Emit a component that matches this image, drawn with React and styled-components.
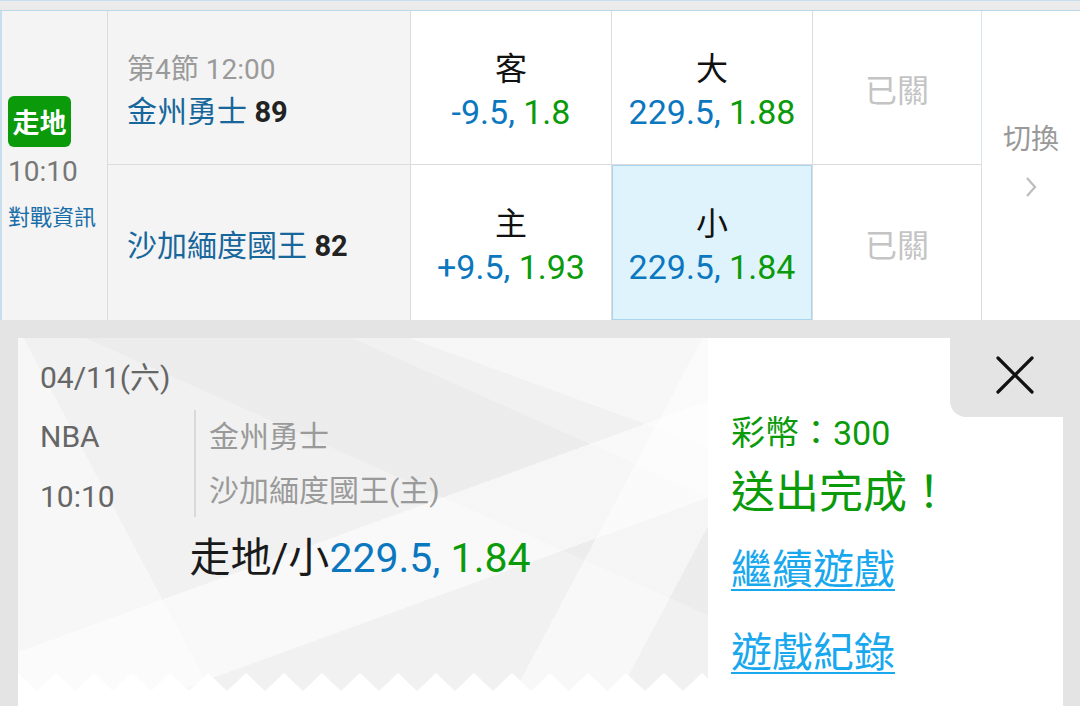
import React from "react";
import styled, { createGlobalStyle } from "styled-components";

const GlobalStyle = createGlobalStyle`
  html, body {
    margin: 0;
    padding: 0;
    background: #e4e4e4;
  }
  body {
    font-family: Roboto, "Noto Sans CJK TC", sans-serif;
    width: 1080px;
    height: 706px;
    overflow: hidden;
  }
  * {
    box-sizing: border-box;
  }
`;

const BLUE = "#0b77bf";
const GREEN = "#0a9a0a";

const rows = [
  {
    team: "金州勇士",
    score: 89,
    side: "客",
    spread: "-9.5",
    spreadOdds: "1.8",
    total: "大",
    totalLine: "229.5",
    totalOdds: "1.88",
  },
  {
    team: "沙加緬度國王",
    score: 82,
    side: "主",
    spread: "+9.5",
    spreadOdds: "1.93",
    total: "小",
    totalLine: "229.5",
    totalOdds: "1.84",
    picked: true,
  },
];

const App = () => {
  return (
    <Page>
      <GlobalStyle />
      <TopStrip />
      <MarketTable>
        <SideCell>
          <LiveBadge>走地</LiveBadge>
          <KickOff>10:10</KickOff>
          <InfoLink>對戰資訊</InfoLink>
        </SideCell>
        {rows.map((row, i) => (
          <React.Fragment key={row.team}>
            <TeamCell $last={i === 1}>
              {i === 0 && <Period>第4節 12:00</Period>}
              <TeamName>
                {row.team} <Score>{row.score}</Score>
              </TeamName>
            </TeamCell>
            <OddsCell $last={i === 1}>
              <OddsLabel>{row.side}</OddsLabel>
              <OddsValue>
                <Line>{row.spread}, </Line>
                <Price>{row.spreadOdds}</Price>
              </OddsValue>
            </OddsCell>
            <OddsCell $last={i === 1} $picked={row.picked}>
              <OddsLabel>{row.total}</OddsLabel>
              <OddsValue>
                <Line>{row.totalLine}, </Line>
                <Price>{row.totalOdds}</Price>
              </OddsValue>
            </OddsCell>
            <ClosedCell $last={i === 1}>已關</ClosedCell>
            {i === 0 && (
              <SwitchCell>
                <SwitchText>切換</SwitchText>
                <svg width="14" height="24" viewBox="0 0 14 24">
                  <path
                    d="M3 3 L11 12 L3 21"
                    fill="none"
                    stroke="#bdbdbd"
                    strokeWidth="2.2"
                  />
                </svg>
              </SwitchCell>
            )}
          </React.Fragment>
        ))}
      </MarketTable>

      <Overlay>
        <Card>
          <Ticket>
            <TicketBody>
              <DateText>04/11(六)</DateText>
              <InfoBlock>
                <MetaCol>
                  <MetaText>NBA</MetaText>
                  <MetaText>10:10</MetaText>
                </MetaCol>
                <TeamsCol>
                  <TicketTeam>金州勇士</TicketTeam>
                  <TicketTeam>沙加緬度國王(主)</TicketTeam>
                </TeamsCol>
              </InfoBlock>
              <BetLine>
                走地/小<Line>229.5, </Line>
                <Price>1.84</Price>
              </BetLine>
            </TicketBody>
            <Zigzag viewBox="0 0 690 18" preserveAspectRatio="none">
              <defs>
                <pattern
                  id="teeth"
                  x="0"
                  y="0"
                  width="38"
                  height="18"
                  patternUnits="userSpaceOnUse"
                >
                  <polygon points="0,0 19,18 38,0 38,18 0,18" fill="#ffffff" />
                </pattern>
              </defs>
              <rect x="0" y="0" width="690" height="18" fill="url(#teeth)" />
            </Zigzag>
          </Ticket>

          <ResultPane>
            <CloseTab aria-label="close">
              <svg width="40" height="40" viewBox="0 0 40 40">
                <path
                  d="M3 3 L37 37 M37 3 L3 37"
                  stroke="#111"
                  strokeWidth="3.2"
                  strokeLinecap="round"
                />
              </svg>
            </CloseTab>
            <Coins>彩幣：300</Coins>
            <Done>送出完成！</Done>
            <ActionLink href="#" $gap={21}>
              繼續遊戲
            </ActionLink>
            <ActionLink href="#" $gap={27}>
              遊戲紀錄
            </ActionLink>
          </ResultPane>
        </Card>
      </Overlay>
    </Page>
  );
};

const Page = styled.div`
  width: 1080px;
  height: 706px;
  display: flex;
  flex-direction: column;
  background: #e4e4e4;
`;

const TopStrip = styled.div`
  height: 11px;
  background: #ebebeb;
  border-top: 1px solid #c6dfee;
  border-bottom: 1px solid #b9d8ea;
`;

const MarketTable = styled.div`
  display: grid;
  grid-template-columns: 108px 303px 201px 201px 169px 98px;
  grid-template-rows: 154px 155px;
  background: #fff;
`;

const Cell = styled.div`
  border-right: 1px solid #dcdcdc;
  border-bottom: ${(p) => (p.$last ? "none" : "1px solid #dcdcdc")};
  display: flex;
  flex-direction: column;
  justify-content: center;
`;

const SideCell = styled(Cell)`
  grid-row: span 2;
  border-bottom: none;
  border-left: 2px solid #c7deed;
  background: #f4f4f4;
  padding-left: 6px;
  padding-bottom: 4px;
  align-items: flex-start;
`;

const LiveBadge = styled.div`
  width: 63px;
  height: 51px;
  border-radius: 6px;
  background: ${GREEN};
  color: #fff;
  font-size: 27px;
  font-weight: 700;
  display: flex;
  align-items: center;
  justify-content: center;
`;

const KickOff = styled.div`
  margin-top: 7px;
  font-size: 28px;
  line-height: 36px;
  color: #777;
`;

const InfoLink = styled.div`
  margin-top: 14px;
  font-size: 22px;
  line-height: 28px;
  color: #1a6ea8;
  white-space: nowrap;
`;

const TeamCell = styled(Cell)`
  background: #f4f4f4;
  padding-left: 19px;
  padding-top: 6px;
`;

const Period = styled.div`
  font-size: 28px;
  line-height: 42px;
  color: #9a9a9a;
`;

const TeamName = styled.div`
  font-size: 30px;
  line-height: 42px;
  color: #17679d;
`;

const Score = styled.span`
  font-weight: 700;
  color: #222;
  font-size: 29px;
`;

const OddsCell = styled(Cell)`
  align-items: center;
  background: ${(p) => (p.$picked ? "#dff3fd" : "#fff")};
  box-shadow: ${(p) => (p.$picked ? "inset 0 0 0 1px #a8d4ee" : "none")};
  padding-top: 6px;
`;

const OddsLabel = styled.div`
  font-size: 32px;
  line-height: 42px;
  color: #111;
`;

const OddsValue = styled.div`
  font-size: 34px;
  line-height: 44px;
  white-space: nowrap;
`;

const Line = styled.span`
  color: ${BLUE};
`;

const Price = styled.span`
  color: ${GREEN};
`;

const ClosedCell = styled(Cell)`
  align-items: center;
  font-size: 32px;
  color: #c4c4c4;
`;

const SwitchCell = styled(Cell)`
  grid-row: span 2;
  border-bottom: none;
  border-right: none;
  border-left: 1px solid #d9e5ee;
  margin-left: -1px;
  align-items: center;
  gap: 17px;
  padding-bottom: 10px;
`;

const SwitchText = styled.div`
  font-size: 28px;
  line-height: 36px;
  color: #999;
`;

const Overlay = styled.div`
  flex: 1;
  padding: 18px 17px 0 18px;
  display: flex;
  min-height: 0;
`;

const Card = styled.div`
  flex: 1;
  display: flex;
  background: #fff;
  overflow: hidden;
`;

const Ticket = styled.div`
  width: 690px;
  height: 353px;
  display: flex;
  flex-direction: column;
  background:
    linear-gradient(160deg, transparent 0 52%, rgba(255, 255, 255, 0.55) 52% 68%, transparent 68%),
    linear-gradient(62deg, rgba(255, 255, 255, 0.45) 0 22%, transparent 22%),
    linear-gradient(118deg, transparent 0 78%, rgba(255, 255, 255, 0.5) 78% 90%, transparent 90%),
    linear-gradient(24deg, transparent 0 58%, rgba(0, 0, 0, 0.018) 58% 76%, transparent 76%),
    linear-gradient(200deg, rgba(255, 255, 255, 0.4) 0 18%, transparent 18%),
    #f1f1f1;
`;

const TicketBody = styled.div`
  flex: 1;
  padding: 20px 0 0 22px;
  display: flex;
  flex-direction: column;
`;

const DateText = styled.div`
  font-size: 30px;
  line-height: 40px;
  color: #666;
`;

const InfoBlock = styled.div`
  margin-top: 12px;
  display: grid;
  grid-template-columns: 154px 1fr;
  align-items: start;
`;

const MetaCol = styled.div`
  display: flex;
  flex-direction: column;
  gap: 6px;
`;

const MetaText = styled.div`
  font-size: 30px;
  line-height: 54px;
  color: #666;
`;

const TeamsCol = styled.div`
  border-left: 2px solid #d9d9d9;
  padding-left: 13px;
  height: 107px;
`;

const TicketTeam = styled.div`
  font-size: 30px;
  line-height: 54px;
  color: #9a9a9a;
  white-space: nowrap;
`;

const BetLine = styled.div`
  margin-top: 9px;
  margin-left: -28px;
  text-align: center;
  font-size: 41px;
  line-height: 50px;
  color: #1a1a1a;
  white-space: nowrap;
`;

const Zigzag = styled.svg`
  display: block;
  width: 690px;
  height: 18px;
`;

const ResultPane = styled.div`
  position: relative;
  flex: 1;
  padding: 75px 0 0 23px;
  display: flex;
  flex-direction: column;
  align-items: flex-start;
`;

const CloseTab = styled.button`
  position: absolute;
  top: 0;
  right: 0;
  width: 113px;
  height: 79px;
  border: none;
  padding: 0;
  background: #e4e4e4;
  border-bottom-left-radius: 16px;
  display: flex;
  align-items: center;
  justify-content: center;
  padding-left: 16px;
  padding-bottom: 6px;
  cursor: pointer;
`;

const Coins = styled.div`
  font-size: 34px;
  line-height: 40px;
  color: ${GREEN};
`;

const Done = styled.div`
  margin-top: 12px;
  font-size: 44px;
  line-height: 56px;
  color: ${GREEN};
`;

const ActionLink = styled.a`
  margin-top: ${(p) => p.$gap}px;
  font-size: 41px;
  line-height: 56px;
  color: #19a8ee;
  text-decoration: underline;
  text-decoration-thickness: 2px;
  text-underline-offset: 5px;
`;

export default App;
